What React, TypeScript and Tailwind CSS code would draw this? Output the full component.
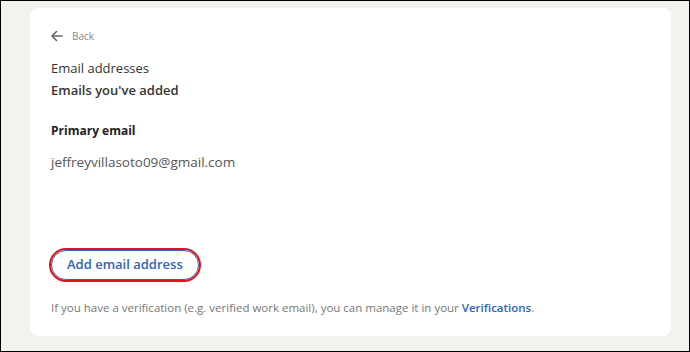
import React from 'react';

const BackArrow: React.FC = () => (
  <svg width="12" height="12" viewBox="0 0 12 12" fill="none" stroke="#666" strokeWidth="1.6" strokeLinecap="round" strokeLinejoin="round">
    <path d="M11 6H1.5" />
    <path d="M5.5 1.5L1 6l4.5 4.5" />
  </svg>
);

const App: React.FC = () => {
  return (
    <div
      className="w-[690px] h-[352px] border border-black bg-[#f3f2ef] pl-[29px] pt-[7px] text-[#333]"
      style={{ fontFamily: '"Open Sans", "Noto Sans", sans-serif' }}
    >
      <div className="w-[641px] h-[328px] bg-white rounded-lg pl-[21px] pt-[22px] flex flex-col">
        {/* Back link */}
        <div className="flex items-center gap-[9px] h-[12px]">
          <BackArrow />
          <span className="text-[10px] text-[#888]">Back</span>
        </div>

        {/* Header */}
        <div className="mt-[15px] text-[13px] leading-[22px]">
          <p className="text-[#333]">Email addresses</p>
          <p className="font-semibold text-[#333]">Emails you've added</p>
        </div>

        {/* Primary email */}
        <div className="mt-[22px]">
          <p className="text-[12px] font-bold text-[#222] leading-[16px]">Primary email</p>
          <p className="mt-[14px] text-[13.5px] text-[#555] leading-[18px]">jeffreyvillasoto09@gmail.com</p>
        </div>

        {/* Add button */}
        <div className="mt-[79px]">
          <button className="h-[30px] px-[15px] rounded-full border border-[#2d64bc] outline outline-2 outline-[#e3131f] text-[13px] font-semibold text-[#2d64bc]">
            Add email address
          </button>
        </div>

        {/* Footer */}
        <p className="mt-[19px] text-[11.5px] text-[#777]">
          If you have a verification (e.g. verified work email), you can manage it in your{' '}
          <span className="font-semibold text-[#2d64bc]">Verifications</span>.
        </p>
      </div>
    </div>
  );
};

export default App;
